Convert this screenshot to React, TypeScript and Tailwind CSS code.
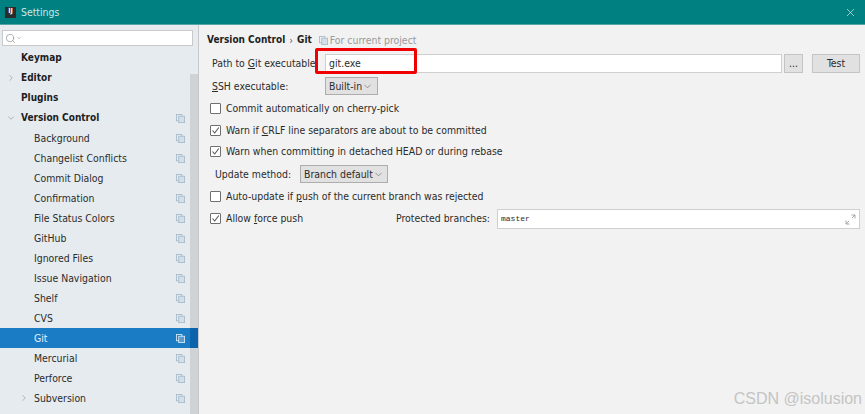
import { ChevronDown, ChevronRight, Search, X } from 'lucide-react';

const items = [
  { label: 'Keymap', bold: true, copy: false },
  { label: 'Editor', bold: true, arrow: 'right', copy: false },
  { label: 'Plugins', bold: true, copy: false },
  { label: 'Version Control', bold: true, arrow: 'down', copy: true },
  { label: 'Background', copy: true, sub: true },
  { label: 'Changelist Conflicts', copy: true, sub: true },
  { label: 'Commit Dialog', copy: true, sub: true },
  { label: 'Confirmation', copy: true, sub: true },
  { label: 'File Status Colors', copy: true, sub: true },
  { label: 'GitHub', copy: true, sub: true },
  { label: 'Ignored Files', copy: true, sub: true },
  { label: 'Issue Navigation', copy: true, sub: true },
  { label: 'Shelf', copy: true, sub: true },
  { label: 'CVS', copy: true, sub: true },
  { label: 'Git', copy: true, sub: true, active: true },
  { label: 'Mercurial', copy: true, sub: true },
  { label: 'Perforce', copy: true, sub: true },
  { label: 'Subversion', copy: true, sub: true, arrow: 'right' },
  { label: 'TFS', copy: true, sub: true },
];

function CopyIcon({ light, className = '' }: { light?: boolean; className?: string }) {
  const c = light ? '#d5e6f5' : '#a9bccb';
  return (
    <svg width="9" height="9" viewBox="0 0 10 10" className={className} fill="none">
      <rect x="0.5" y="0.5" width="6" height="7" stroke={c} />
      <rect x="3" y="2.5" width="6.5" height="7" fill={light ? '#5a9bd2' : '#d5dfe8'} stroke={c} />
    </svg>
  );
}

function Check({ checked, label }: { checked?: boolean; label: React.ReactNode }) {
  return (
    <div className="flex items-center gap-[5px] h-[16px]">
      <div className="w-[11px] h-[11px] border border-[#6f6f6f] bg-white rounded-[1px] flex items-center justify-center">
        {checked && (
          <svg width="9" height="9" viewBox="0 0 9 9" fill="none">
            <path d="M1.5 4.5 L3.7 7 L7.8 1.5" stroke="#555" strokeWidth="1.1" />
          </svg>
        )}
      </div>
      <span className="whitespace-nowrap">{label}</span>
    </div>
  );
}

function Combo({ text, width }: { text: string; width: string }) {
  return (
    <div className={`${width} h-[18px] bg-[#e1e1e1] border border-[#adadad] flex items-center justify-between pl-[3px] pr-[4px]`}>
      <span className="whitespace-nowrap">{text}</span>
      <ChevronDown size={11} strokeWidth={1.2} className="text-[#555] shrink-0" />
    </div>
  );
}

export default function App() {
  return (
    <div
      className="relative w-[865px] h-[414px] overflow-hidden bg-[#f2f2f2] text-[10.4px] font-stretch-condensed leading-[14px] text-[#2b2b2b] flex flex-col"
      style={{ fontFamily: '"DejaVu Sans", sans-serif' }}
    >
      <div className="h-[25px] shrink-0 bg-[#008080] border-b border-[#55a5a5] flex items-center pl-[5px] pr-[8px] text-[#cfe6e6]">
        <div className="w-[11px] h-[11px] bg-[#2b2b2b] text-white text-[7px] leading-[9px] font-bold text-center">IJ</div>
        <span className="ml-[5px] text-[10.4px]">Settings</span>
        <X size={13} strokeWidth={1.2} className="ml-auto text-[#e5f2f2]" />
      </div>
      <div className="flex-1 flex min-h-0">
        <div className="w-[199px] shrink-0 bg-[#e6ebf0] border-r border-[#c6c8ca] flex flex-col overflow-hidden">
          <div className="pl-[2px] pr-[5px] pt-[5px] pb-[2px]">
            <div className="h-[16px] bg-white border border-[#c9c9c9] flex items-center pl-[2px] text-[#888]">
              <Search size={11} strokeWidth={1.4} />
              <ChevronDown size={6} strokeWidth={2} />
            </div>
          </div>
          <div className="flex-1 relative">
            <div className="absolute right-0 top-[26px] bottom-0 w-[8px] bg-[#cfd3d6]" />
            {items.map((it) => (
              <div
                key={it.label}
                className={`relative h-[20px] flex items-center ${it.active ? 'bg-[#1a7cc4] text-[#e6f0f8]' : ''} ${it.bold ? 'font-bold text-[10px] text-[#1e1e1e]' : ''}`}
              >
                {it.arrow && (
                  <div className={`absolute text-[#8b8b8b] ${it.sub ? 'left-[19px]' : 'left-[6px]'}`}>
                    {it.arrow === 'right' ? <ChevronRight size={10} strokeWidth={1.4} /> : <ChevronDown size={10} strokeWidth={1.4} />}
                  </div>
                )}
                <span className={it.sub ? 'pl-[34px]' : 'pl-[21px]'}>{it.label}</span>
                {it.active && <div className="absolute right-0 top-0 bottom-0 w-[8px] bg-[#0b63ab]" />}
                {it.copy && <CopyIcon light={it.active} className="absolute right-[13px]" />}
              </div>
            ))}
          </div>
        </div>
        <div className="flex-1 pt-[8px] pl-[8px] pr-[5px] flex flex-col">
          <div className="flex items-center h-[14px]">
            <span className="font-bold text-[10px] text-[#1e1e1e]">Version Control</span>
            <span className="mx-[4px] text-[#555]">›</span>
            <span className="font-bold text-[10px] text-[#1e1e1e]">Git</span>
            <CopyIcon className="ml-[7px]" />
            <span className="ml-[2px] text-[#9a9a9a]">For current project</span>
          </div>
          <div className="flex items-center mt-[6px] h-[20px] pl-[5px]">
            <span className="w-[113px] shrink-0 whitespace-nowrap">Path to <u>G</u>it executable:</span>
            <div className="flex-1 h-[19px] bg-white border border-[#cfcfcf] flex items-center pl-[3px]">git.exe</div>
            <div className="ml-[2px] w-[19px] h-[19px] bg-[#e1e1e1] border border-[#c4c4c4] flex items-center justify-center">...</div>
            <div className="ml-[9px] w-[48px] h-[19px] bg-[#e1e1e1] border border-[#c4c4c4] flex items-center justify-center">Test</div>
          </div>
          <div className="flex items-center mt-[4px] h-[18px] pl-[5px]">
            <span className="w-[113px] shrink-0 whitespace-nowrap"><u>S</u>SH executable:</span>
            <Combo text="Built-in" width="w-[53px]" />
          </div>
          <div className="flex flex-col mt-[5px] pl-[3px]">
            <Check label="Commit automatically on cherry-pick" />
            <div className="mt-[6px]">
              <Check checked label={<>Warn if <u>C</u>RLF line separators are about to be committed</>} />
            </div>
            <div className="mt-[5px]">
              <Check checked label="Warn when committing in detached HEAD or during rebase" />
            </div>
          </div>
          <div className="flex items-center mt-[6px] h-[18px] pl-[8px]">
            <span className="w-[85px] shrink-0 whitespace-nowrap">Update method:</span>
            <Combo text="Branch default" width="w-[88px]" />
          </div>
          <div className="mt-[5px] pl-[3px]">
            <Check label={<>Auto-update if <u>p</u>ush of the current branch was rejected</>} />
          </div>
          <div className="flex items-start mt-[5px] h-[20px] pl-[3px]">
            <div className="w-[186px] shrink-0 mt-px">
              <Check checked label={<>Allow <u>f</u>orce push</>} />
            </div>
            <span className="w-[101px] shrink-0 whitespace-nowrap mt-[2px]">Protected branches:</span>
            <div className="flex-1 h-[20px] bg-white border border-[#cfcfcf] flex items-center justify-between pl-[3px] pr-[3px]">
              <span className="text-[8px] font-['Liberation_Mono',monospace]">master</span>
              <svg width="11" height="11" viewBox="0 0 11 11" fill="none" stroke="#8a98a0" strokeWidth="0.8">
                <path d="M6.5 1 H10 V4.5 M10 1 L7 4 M4.5 10 H1 V6.5 M1 10 L4 7" />
              </svg>
            </div>
          </div>
        </div>
      </div>
      <div className="absolute left-[315px] top-[48px] w-[102px] h-[26px] border-[3px] border-[#f00000] rounded-[2px]" />
      <div
        className="absolute right-[3px] top-[389px] text-[16px] leading-[20px] text-[#c4c4c4] font-stretch-normal"
        style={{ fontFamily: '"Liberation Sans", sans-serif' }}
      >
        CSDN @isolusion
      </div>
    </div>
  );
}
